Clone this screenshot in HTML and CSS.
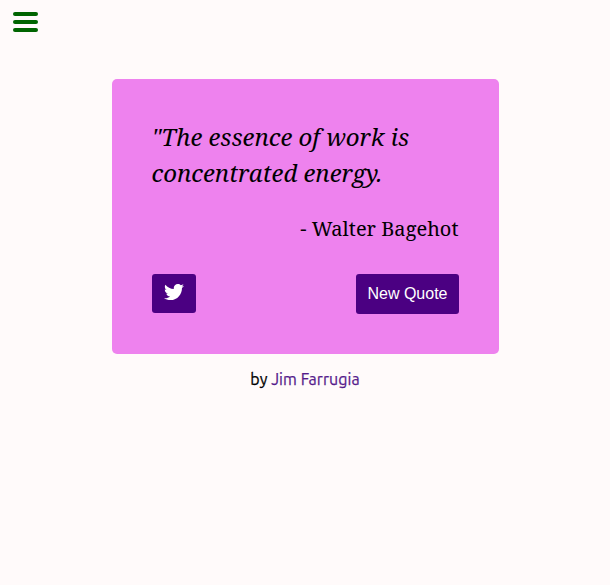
FILE: index.html
```html
<!DOCTYPE html>
<html lang="en">
<head>
<meta charset="utf-8">
<title>Random Quote</title>
<link rel="stylesheet" href="styles.css">
</head>
<body>
<nav class="nav">
  <button class="menu" aria-label="Menu"><span class="bar"></span><span class="bar"></span><span class="bar"></span></button>
</nav>
<main class="page">
  <section class="quote-box">
    <p class="text">"The essence of work is concentrated energy.</p>
    <p class="author">- Walter Bagehot</p>
    <div class="actions">
      <a class="tweet" href="#" aria-label="Tweet"><svg class="bird" viewBox="0 0 512 512"><path d="M459.37 151.716c.325 4.548.325 9.097.325 13.645 0 138.72-105.583 298.558-298.558 298.558-59.452 0-114.68-17.219-161.137-47.106 8.447.974 16.568 1.299 25.34 1.299 49.055 0 94.213-16.568 130.274-44.832-46.132-.975-84.792-31.188-98.112-72.772 6.498.974 12.995 1.624 19.818 1.624 9.421 0 18.843-1.3 27.614-3.573-48.081-9.747-84.143-51.98-84.143-102.985v-1.299c13.969 7.797 30.214 12.67 47.431 13.319-28.264-18.843-46.781-51.005-46.781-87.391 0-19.492 5.197-37.36 14.294-52.954 51.655 63.675 129.3 105.258 216.365 109.807-1.624-7.797-2.599-15.918-2.599-24.04 0-57.828 46.782-104.934 104.934-104.934 30.213 0 57.502 12.67 76.67 33.137 23.715-4.548 46.456-13.32 66.599-25.34-7.798 24.366-24.366 44.833-46.132 57.827 21.117-2.273 41.584-8.122 60.426-16.243-14.292 20.791-32.161 39.308-52.628 54.253z"/></svg></a>
      <button class="new-quote">New Quote</button>
    </div>
  </section>
  <footer class="credit">by <a class="credit-link" href="#">Jim Farrugia</a></footer>
</main>
</body>
</html>
```
FILE: styles.css
```css
* { box-sizing: border-box; }
body { margin: 0; background: #fffafa; color: #000; }
.nav { height: 79px; padding: 12px 13px; }
.menu { display: flex; flex-direction: column; gap: 4px; width: 25px; padding: 0; border: 0; background: none; }
.bar { width: 25px; height: 4px; border-radius: 2px; background: #006400; }
.page { display: flex; flex-direction: column; align-items: center; }
.quote-box { width: 387px; height: 275px; padding: 40px; border-radius: 5px; background: violet; font-family: "Noto Serif", "Droid Serif", "DejaVu Serif", serif; }
.text { margin: 0; font-size: 24px; line-height: 36px; font-style: italic; }
.author { margin: 23px 0 0; font-size: 20px; line-height: 30px; text-align: right; letter-spacing: 0.02px; }
.actions { display: flex; justify-content: space-between; align-items: flex-start; margin-top: 30px; }
.tweet { display: flex; align-items: center; justify-content: center; width: 44px; height: 39px; padding-bottom: 3px; border-radius: 3px; background: indigo; }
.bird { width: 20px; height: 20px; fill: #fff; }
.new-quote { width: 103px; height: 40px; padding: 0 0 0 1px; border: 0; border-radius: 3px; background: indigo; color: #fff; font: 16px "Liberation Sans", Arial, sans-serif; }
.credit { margin-top: 13px; font: 400 16px/24px Ubuntu, "Open Sans", sans-serif; letter-spacing: 0.06px; -webkit-text-stroke: 0.25px; }
.credit-link { color: #551a8b; text-decoration: none; }
```
